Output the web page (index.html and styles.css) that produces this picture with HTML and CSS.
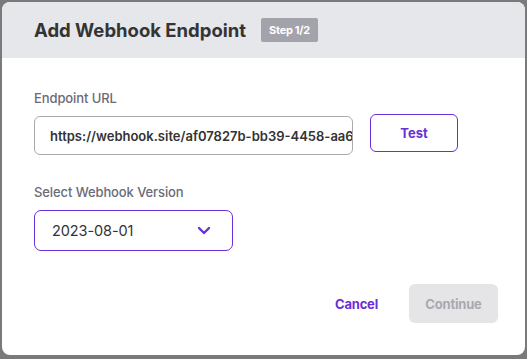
FILE: index.html
```html
<!DOCTYPE html>
<html>
<head>
<meta charset="utf-8">
<link rel="stylesheet" href="styles.css">
</head>
<body>
<div class="backdrop">
  <div class="modal">
    <div class="modal-header">
      <h1 class="title">Add Webhook Endpoint</h1>
      <span class="badge">Step 1/2</span>
    </div>
    <div class="modal-body">
      <div class="field">
        <label class="label">Endpoint URL</label>
        <div class="row">
          <div class="input">https://webhook.site/af07827b-bb39-4458-aa6f</div>
          <button class="btn-outline">Test</button>
        </div>
      </div>
      <div class="field">
        <label class="label">Select Webhook Version</label>
        <div class="select">
          <span>2023-08-01</span>
          <svg class="chev" width="14" height="9" viewBox="0 0 14 9"><path d="M2 2l5 5 5-5" fill="none" stroke="#6a2fd6" stroke-width="2.4" stroke-linecap="round" stroke-linejoin="round"/></svg>
        </div>
      </div>
    </div>
    <div class="modal-footer">
      <button class="btn-link">Cancel</button>
      <button class="btn-disabled">Continue</button>
    </div>
  </div>
</div>
</body>
</html>
```
FILE: styles.css
```css
* { box-sizing: border-box; }
html, body { margin: 0; padding: 0; }
body {
  width: 527px;
  height: 359px;
  background: #7a7a7a;
  font-family: Inter, "Liberation Sans", sans-serif;
  overflow: hidden;
}
.backdrop {
  padding: 2px 2px 0 2px;
}
.modal {
  width: 523px;
  height: 353px;
  background: #fff;
  border-radius: 8px;
  overflow: hidden;
  display: flex;
  flex-direction: column;
}
.modal-header {
  height: 56px;
  background: #e5e7eb;
  display: flex;
  align-items: center;
  padding-left: 32px;
  gap: 15px;
}
.title {
  margin: 0;
  font-size: 18.5px;
  font-weight: 700;
  color: #343434;
  letter-spacing: 0;
}
.badge {
  background: #a3a3ab;
  color: #fff;
  font-size: 11px;
  font-weight: 700;
  height: 24px;
  line-height: 24px;
  padding: 0 8px;
  border-radius: 2px;
  letter-spacing: -0.3px;
}
.modal-body {
  padding: 32px 32px 0 32px;
  display: flex;
  flex-direction: column;
  gap: 29px;
}
.field {
  display: flex;
  flex-direction: column;
  gap: 10px;
}
.label {
  font-size: 13px;
  font-weight: 500;
  color: #6b6b78;
  letter-spacing: -0.1px;
}
.row {
  display: flex;
  align-items: flex-start;
  gap: 17px;
}
.input {
  width: 319px;
  height: 39px;
  border: 1px solid #a9a9b0;
  border-radius: 6px;
  padding: 0 0 0 15px;
  display: flex;
  align-items: center;
  font-size: 13px;
  font-weight: 600;
  color: #333;
  letter-spacing: 0;
  white-space: nowrap;
  overflow: hidden;
}
.btn-outline {
  margin-top: -2px;
  width: 88px;
  height: 38px;
  border: 1px solid #6a2fd6;
  border-radius: 6px;
  background: #fff;
  color: #6a2fd6;
  font-family: inherit;
  font-size: 13px;
  font-weight: 700;
}
.select {
  width: 199px;
  height: 41px;
  border: 1px solid #6a2fd6;
  border-radius: 7px;
  padding: 0 21px 0 17px;
  display: flex;
  align-items: center;
  justify-content: space-between;
  font-size: 14.5px;
  color: #333;
  letter-spacing: -0.1px;
}
.modal-footer {
  margin-top: auto;
  padding: 0 27px 32px 0;
  display: flex;
  justify-content: flex-end;
  align-items: center;
  gap: 31px;
}
.btn-link {
  border: none;
  background: none;
  padding: 0;
  color: #6a2fd6;
  font-family: inherit;
  font-size: 13px;
  font-weight: 700;
  letter-spacing: -0.2px;
}
.btn-disabled {
  width: 89px;
  height: 39px;
  border: none;
  border-radius: 6px;
  background: #e5e5e8;
  color: #a9a9b1;
  font-family: inherit;
  font-size: 13px;
  font-weight: 700;
  letter-spacing: -0.2px;
}
```
